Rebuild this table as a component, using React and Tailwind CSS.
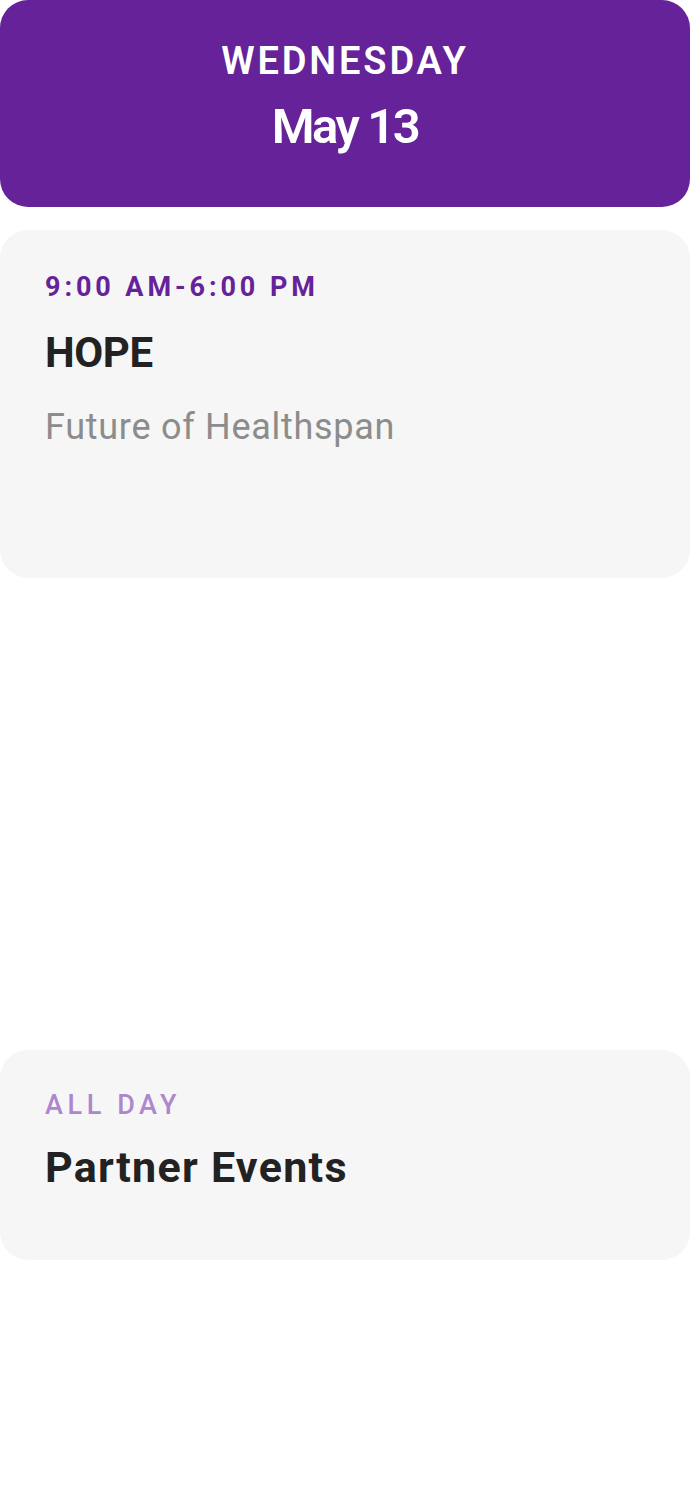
import React from "react";

const events = [
  { time: "9:00 AM-6:00 PM", title: "HOPE", subtitle: "Future of Healthspan", allDay: false },
  { time: "ALL DAY", title: "Partner Events", allDay: true },
];

export default function App() {
  return (
    <div className="w-[690px] min-h-[1500px] bg-white font-['Roboto',sans-serif]">
      {/* Day header */}
      <div className="h-[207px] rounded-[28px] bg-[#652299] flex flex-col items-center pt-[37px]">
        <div className="text-[38px] leading-[48px] font-semibold tracking-[0.075em] text-white">WEDNESDAY</div>
        <div className="mt-[12px] text-[49px] leading-[60px] font-semibold text-white tracking-[-0.05em]">May 13</div>
      </div>

      {/* First event */}
      <div className="mt-[23px] h-[348px] rounded-[28px] bg-[#f6f6f6] px-[45px] pt-[40px]">
        <div className="text-[27px] leading-[34px] font-bold tracking-[0.145em] text-[#652299]">{events[0].time}</div>
        <div className="mt-[24px] text-[42px] leading-[50px] font-bold text-[#222222] tracking-[-0.01em]">{events[0].title}</div>
        <div className="mt-[28px] text-[36px] leading-[42px] text-[#8c8c8c] tracking-[0.02em]">{events[0].subtitle}</div>
      </div>

      {/* Second event */}
      <div className="mt-[472px] h-[210px] rounded-[28px] bg-[#f6f6f6] px-[45px] pt-[38px]">
        <div className="text-[27px] leading-[34px] font-medium tracking-[0.17em] text-[#ad86cf]">{events[1].time}</div>
        <div className="mt-[20px] text-[43px] leading-[50px] font-bold text-[#222222] tracking-[0.03em]">{events[1].title}</div>
      </div>
    </div>
  );
}
